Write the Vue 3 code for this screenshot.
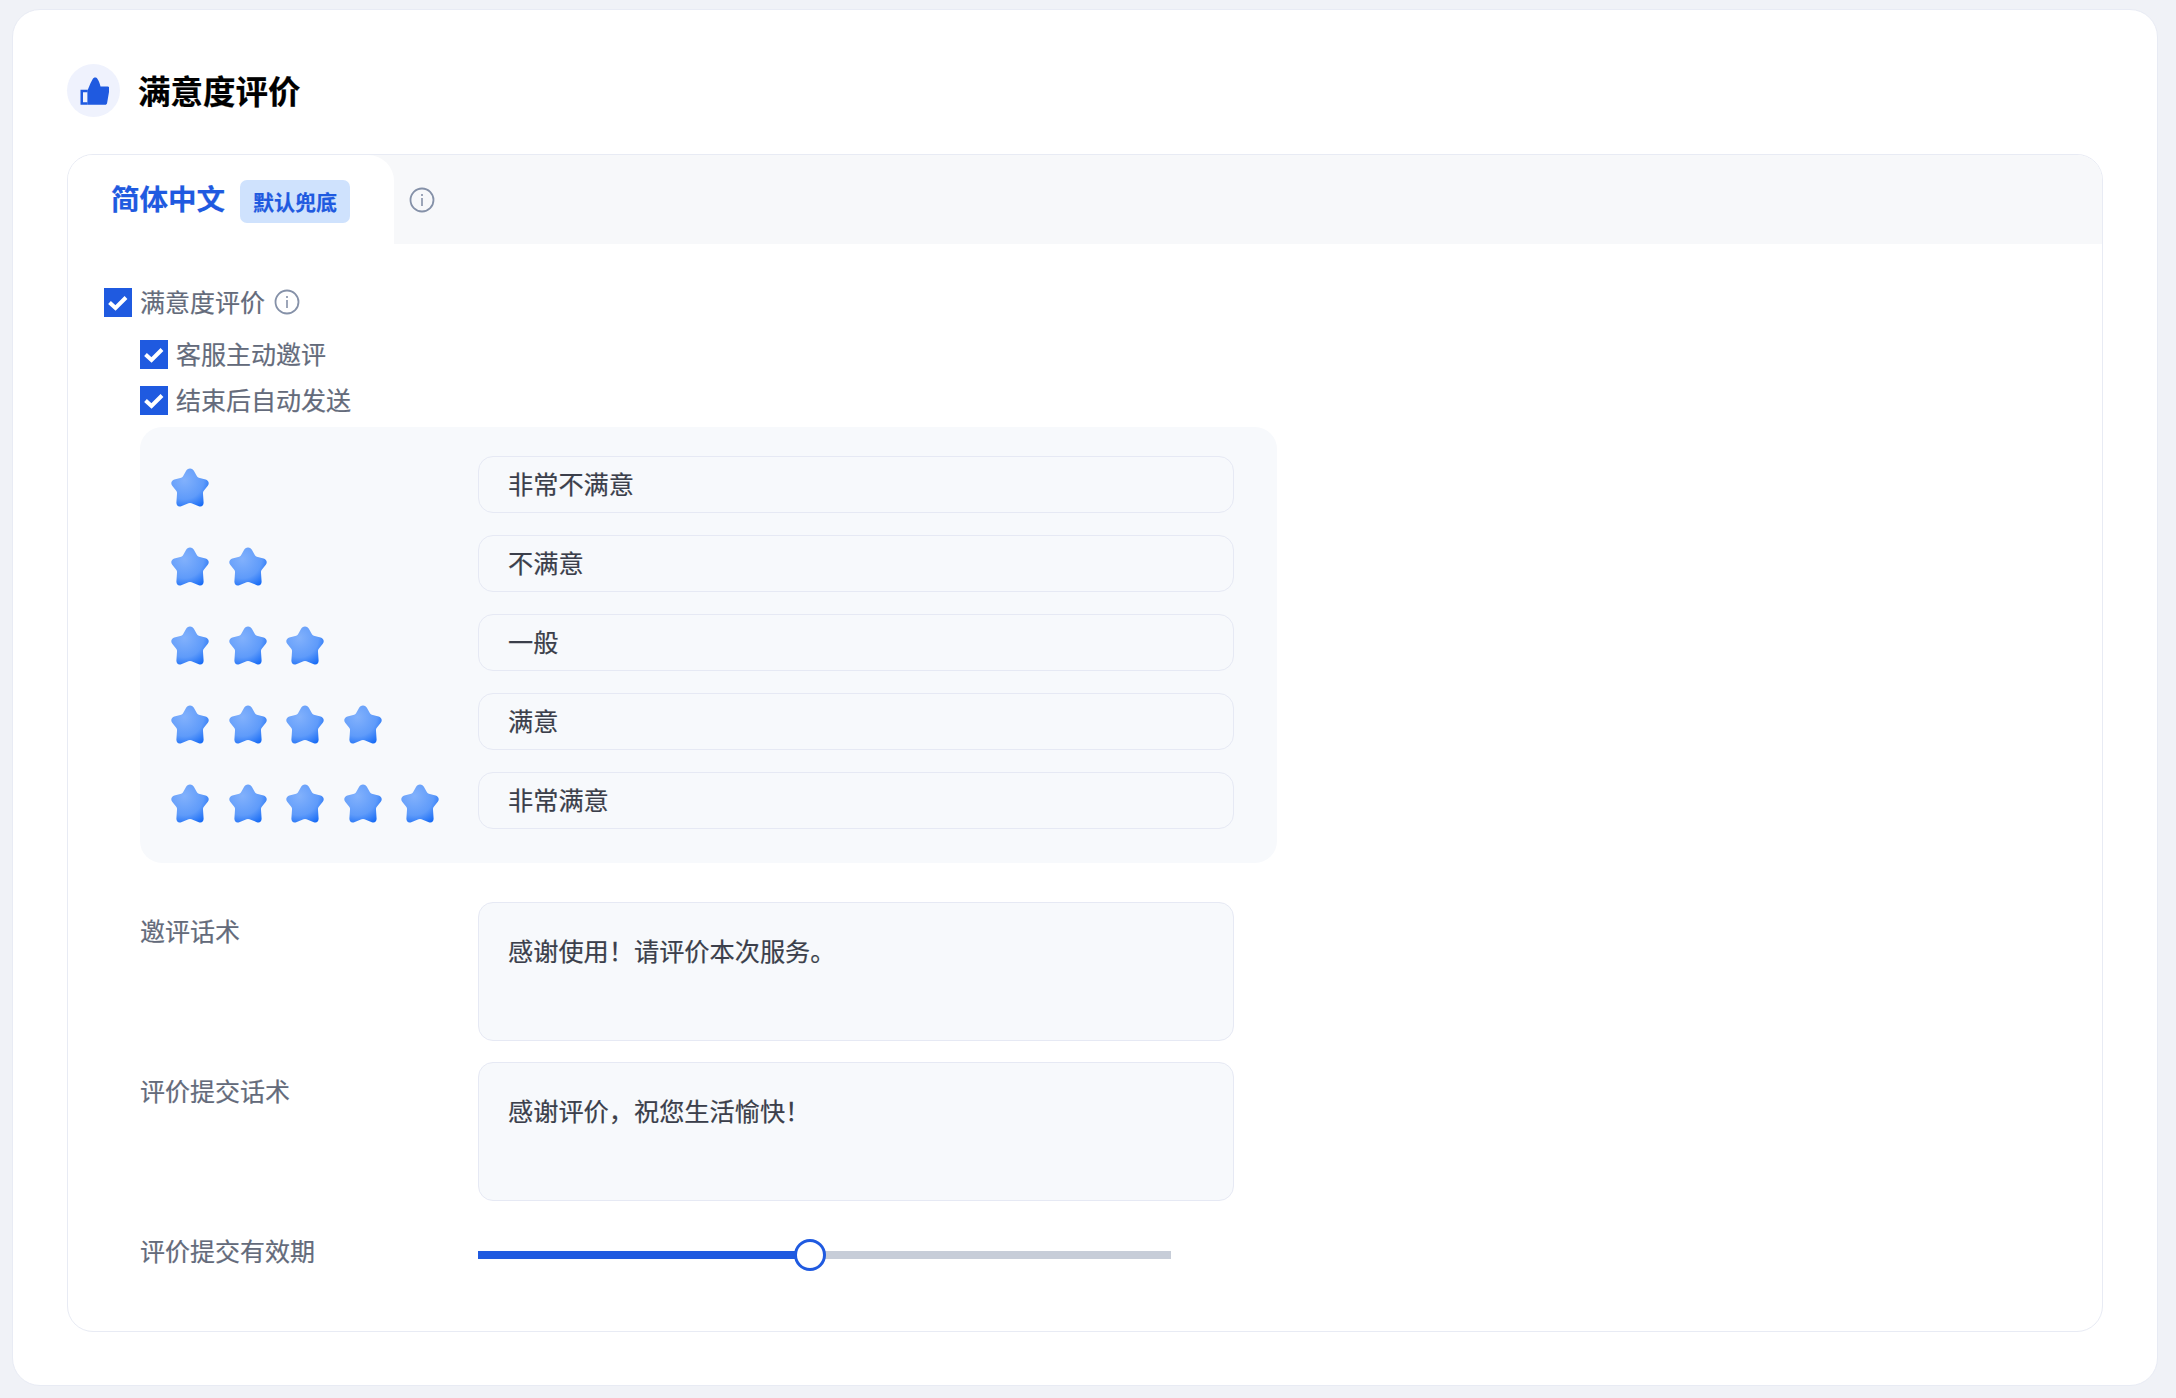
<script setup>
const rows = [
  { n: 1, text: '非常不满意' },
  { n: 2, text: '不满意' },
  { n: 3, text: '一般' },
  { n: 4, text: '满意' },
  { n: 5, text: '非常满意' },
]
const starPath = 'M19 .5C21 .5 22.2 1.6 23 3L25.800 7.800Q26.300 9 27.800 9.600L34.600 11.200C37.300 11.800 38.800 15 36.800 17.400L32.800 22.200Q31.800 23.400 32 25L32.600 33.600C32.800 36.600 30.400 38.300 27.800 37.200L20.500 34.400Q19 33.900 17.500 34.400L10.200 37.200C7.600 38.300 5.200 36.600 5.400 33.600L6 25Q6.200 23.400 5.200 22.200L1.200 17.400C-.8 15 .7 11.800 3.400 11.200L10.200 9.600Q11.700 9 12.200 7.800L15 3C15.800 1.600 17 .5 19 .5z'
</script>

<template>
  <div class="page">
    <div class="card">
      <header class="head">
        <span class="head-icon">
          <svg width="30" height="30" viewBox="0 0 30 30">
            <path fill="#1f5ae0" fill-rule="evenodd" d="M1.500 13.800H8.800V28.800H1.500zM4 16.300V26.300H8.300V16.300z" />
            <path fill="#1f5ae0" d="M8.800 13.800 11.500 7.200 13.600 3.200C14.600 1 17.400 1 18.500 3 19.800 5 20.800 7.400 21.500 10.500H28.800C30 10.500 30.600 11.500 30.500 13L28.100 27C27.900 28.200 27.200 28.800 26 28.800H8.800z" />
          </svg>
        </span>
        <h1 class="title">满意度评价</h1>
      </header>

      <section class="inner">
        <div class="tabs">
          <div class="tab">
            <span class="tab-text">简体中文</span>
            <span class="badge">默认兜底</span>
          </div>
          <svg class="tab-info" width="26" height="26" viewBox="0 0 26 26">
            <circle cx="13" cy="13" r="11.500" fill="none" stroke="#8591a8" stroke-width="1.800" />
            <rect x="12.200" y="11" width="1.600" height="8" fill="#8591a8" />
            <rect x="12.200" y="7" width="1.600" height="2" fill="#8591a8" />
          </svg>
        </div>

        <div class="body">
          <label class="check main">
            <span class="box"><svg width="28" height="29" viewBox="0 0 28 29"><path d="M5.500 14.500l6 5.500L22 9.500" fill="none" stroke="#fff" stroke-width="4" /></svg></span>
            <span class="txt">满意度评价</span>
            <svg class="info" width="26" height="26" viewBox="0 0 26 26">
              <circle cx="13" cy="13" r="11.500" fill="none" stroke="#8591a8" stroke-width="1.800" />
              <rect x="12.200" y="11" width="1.600" height="8" fill="#8591a8" />
              <rect x="12.200" y="7" width="1.600" height="2" fill="#8591a8" />
            </svg>
          </label>

          <div class="sub">
            <label class="check first">
              <span class="box"><svg width="28" height="29" viewBox="0 0 28 29"><path d="M5.500 14.500l6 5.500L22 9.500" fill="none" stroke="#fff" stroke-width="4" /></svg></span>
              <span class="txt">客服主动邀评</span>
            </label>
            <label class="check second">
              <span class="box"><svg width="28" height="29" viewBox="0 0 28 29"><path d="M5.500 14.500l6 5.500L22 9.500" fill="none" stroke="#fff" stroke-width="4" /></svg></span>
              <span class="txt">结束后自动发送</span>
            </label>

            <div class="panel">
              <div v-for="r in rows" :key="r.n" class="rate">
                <div class="stars">
                  <svg v-for="i in r.n" :key="i" class="star" width="38" height="39" viewBox="0 0 38 38" preserveAspectRatio="none">
                    <defs>
                      <radialGradient :id="`g${r.n}${i}`" cx="0.350" cy="0.300" r="0.850">
                        <stop offset="0" stop-color="#82b1fc" />
                        <stop offset="0.600" stop-color="#5f9bfa" />
                        <stop offset="1" stop-color="#0f66f5" />
                      </radialGradient>
                    </defs>
                    <path :d="starPath" :fill="`url(#g${r.n}${i})`" />
                  </svg>
                </div>
                <div class="field">{{ r.text }}</div>
              </div>
            </div>

            <div class="form-row area-first">
              <span class="label">邀评话术</span>
              <div class="area">感谢使用！请评价本次服务。</div>
            </div>
            <div class="form-row area-second">
              <span class="label">评价提交话术</span>
              <div class="area">感谢评价，祝您生活愉快！</div>
            </div>
            <div class="form-row slider-row">
              <span class="label">评价提交有效期</span>
              <div class="slider">
                <div class="fill"></div>
                <div class="thumb"></div>
              </div>
            </div>
          </div>
        </div>
      </section>
    </div>
  </div>
</template>

<style>
html, body { margin: 0; background: #f0f2f7; }
</style>

<style scoped>
.page {
  box-sizing: border-box;
  width: 2176px;
  height: 1398px;
  padding: 9px 18px 12px 12px;
  background: #f0f2f7;
  font-family: "Noto Sans CJK SC", "Liberation Sans", sans-serif;
  -webkit-text-stroke: 0.2px currentColor;
}
.card {
  box-sizing: border-box;
  height: 1377px;
  padding: 54px 54px 0 54px;
  background: #fff;
  border: 1px solid #e8ebf4;
  border-radius: 28px;
}
.head { display: flex; align-items: center; gap: 18px; height: 53px; }
.head-icon {
  width: 53px; height: 53px; border-radius: 50%;
  background: #eff2fd;
  display: flex; align-items: center; justify-content: center;
}
.title { margin: -2px 0 0; font-size: 32.500px; font-weight: 700; color: #000; line-height: 53px; }
.inner {
  box-sizing: border-box;
  margin-top: 37px;
  height: 1178px;
  border: 1px solid #e8ebf4;
  border-radius: 26px;
  overflow: hidden;
}
.tabs { height: 89px; background: #f7f8fa; display: flex; align-items: center; }
.tab {
  box-sizing: border-box;
  width: 326px; height: 89px;
  padding-left: 43px;
  background: #fff;
  border-radius: 0 26px 0 0;
  display: flex; align-items: center; gap: 15px;
}
.tab-text { margin-top: -3px; font-size: 28.500px; font-weight: 700; color: #1f5ae0; line-height: 40px; }
.badge {
  box-sizing: border-box;
  display: flex; align-items: center; justify-content: center;
  width: 110px; height: 43px;
  margin-top: 4px;
  padding-bottom: 2px;
  background: #cfe2fd;
  border-radius: 7px;
  font-size: 21px; font-weight: 700; color: #1f5ae0;
}
.tab-info { margin-left: 15px; margin-top: 1px; }
.body { padding: 44px 0 0 36px; }
.check {
  display: flex; align-items: center; gap: 8px;
  font-size: 25px; color: #646b7b; line-height: 29px;
  height: 29px;
}
.txt { margin-top: -2px; }
.box { width: 28px; height: 29px; background: #1f5ae0; display: block; flex: none; }
.box svg { display: block; }
.main .info { margin-left: 1px; margin-top: -1px; }
.sub { padding-left: 36px; }
.first { margin-top: 23px; }
.second { margin-top: 17px; }
.panel {
  box-sizing: border-box;
  width: 1137px; height: 436px;
  margin-top: 12px;
  padding: 29px 43px 0 0;
  background: #f7f9fc;
  border-radius: 22px;
  display: flex; flex-direction: column; gap: 22px;
}
.rate { display: flex; align-items: center; justify-content: space-between; height: 57px; }
.stars { display: flex; gap: 19.600px; padding-left: 31px; margin-top: 6px; }
.star { display: block; flex: none; }
.field {
  box-sizing: border-box;
  width: 756px; height: 57px;
  padding-left: 29px;
  border: 1px solid #e6e9f4;
  border-radius: 15px;
  font-size: 25.200px; color: #3b3f4b; line-height: 52px;
}
.form-row { display: flex; }
.label { width: 338px; flex: none; font-size: 25px; color: #646b7b; line-height: 30px; }
.area-first { margin-top: 39px; }
.area-second { margin-top: 21px; }
.area-first .label, .area-second .label { padding-top: 13px; }
.area {
  box-sizing: border-box;
  width: 756px; height: 139px;
  padding: 32px 29px 0;
  background: #f7f9fc;
  border: 1px solid #e6e9f4;
  border-radius: 15px;
  font-size: 25.200px; color: #3b3f4b; line-height: 30px;
}
.slider-row { margin-top: 38px; height: 32px; align-items: center; }
.slider-row .label { margin-top: -10px; }
.slider { position: relative; width: 693px; height: 8px; background: #c7cdd8; }
.fill { width: 332px; height: 8px; background: #1f5ae0; }
.thumb {
  position: absolute; left: 316px; top: -12px;
  box-sizing: border-box;
  width: 32px; height: 32px;
  border: 3px solid #1f5ae0; border-radius: 50%;
  background: #fff;
}
</style>
